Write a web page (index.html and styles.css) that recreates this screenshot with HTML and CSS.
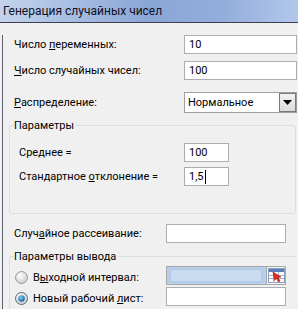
FILE: index.html
```html
<!DOCTYPE html>
<html>
<head>
<meta charset="utf-8">
<link rel="stylesheet" href="styles.css">
</head>
<body>
<div class="titlebar"><span class="title">Генерация случайных чисел</span></div>
<div class="content">
  <div class="row r1"><span class="label">Число <u>п</u>еременных:</span><div class="input wide">10</div></div>
  <div class="row r2"><span class="label"><u>Ч</u>исло случайных чисел:</span><div class="input wide">100</div></div>
  <div class="row r3"><span class="label"><u>Р</u>аспределение:</span>
    <div class="select"><span class="sel-text">Нормальное</span><span class="sel-btn"><svg width="9" height="5" viewBox="0 0 9 5"><path d="M0 0H9L4.5 5Z" fill="#000"/></svg></span></div>
  </div>
  <fieldset class="group g1">
    <legend>Параметры</legend>
    <div class="row gr1"><span class="label glabel">Сре<u>д</u>нее =</span><div class="input small">100</div></div>
    <div class="row gr2"><span class="label glabel">Стандартное <u>о</u>тклонение =</span><div class="input small">1,5<span class="caret"></span></div></div>
  </fieldset>
  <div class="row r4"><span class="label rlabel">Случ<u>а</u>йное рассеивание:</span><div class="input mid"></div></div>
  <fieldset class="group g2">
    <legend>Параметры вывода</legend>
    <div class="row rr1">
      <span class="radio"><svg width="13" height="13" viewBox="0 0 13 13"><defs><radialGradient id="ru" cx="0.4" cy="0.35" r="0.7"><stop offset="0" stop-color="#ffffff"/><stop offset="1" stop-color="#c9c9c9"/></radialGradient></defs><circle cx="6.5" cy="6.5" r="6" fill="url(#ru)" stroke="#9a9a9a"/></svg></span>
      <span class="label olabel">В<u>ы</u>ходной интервал:</span>
      <div class="refedit"><div class="ref-field"></div><span class="ref-btn"><svg width="17" height="15" viewBox="0 0 17 15"><rect x="0.5" y="0.5" width="16" height="14" fill="#ffffff" stroke="#8aa0bc"/><rect x="1" y="1" width="15" height="3" fill="#5a7fb8"/><path d="M1 7.5H16M1 10.5H16M5.5 4V15M10.5 4V15" stroke="#9fb3cc" stroke-width="1"/><path d="M5 4L13 9L10 9.5L12 13L10.5 14L8.5 10.5L6.5 12.5Z" fill="#e03020" stroke="#a01810" stroke-width="0.6"/></svg></span></div>
    </div>
    <div class="row rr2">
      <span class="radio"><svg width="13" height="13" viewBox="0 0 13 13"><defs><radialGradient id="rc" cx="0.4" cy="0.35" r="0.7"><stop offset="0" stop-color="#ffffff"/><stop offset="1" stop-color="#c9c9c9"/></radialGradient><radialGradient id="rd" cx="0.4" cy="0.35" r="0.7"><stop offset="0" stop-color="#7fd0ff"/><stop offset="1" stop-color="#0a5a9a"/></radialGradient></defs><circle cx="6.5" cy="6.5" r="6" fill="url(#rc)" stroke="#5a6a7a"/><circle cx="6.5" cy="6.5" r="3.3" fill="url(#rd)"/></svg></span>
      <span class="label olabel">Новый рабочий <u>л</u>ист:</span>
      <div class="input mid"></div>
    </div>
  </fieldset>
</div>
</body>
</html>
```

FILE: styles.css
```css
* { box-sizing: border-box; }
html, body { margin: 0; padding: 0; }
body {
  width: 298px;
  height: 309px;
  overflow: hidden;
  background: #f0f0f0;
  font-family: Roboto, "Liberation Sans", Arial, sans-serif;
  font-size: 11px;
  color: #000;
}
u { text-decoration: underline; text-underline-offset: 1px; }
.titlebar {
  height: 23px;
  background: linear-gradient(90deg, #c3d3ea 0%, #a6bde2 25%, #8aa6d6 50%, #93aedc 75%, #b2c7ea 100%);
  border-bottom: 1px solid #3e4050;
  padding-left: 3px;
  display: flex;
  align-items: center;
}
.title { font-size: 12px; color: #101020; }
.content {
  margin-left: 2px;
  border-left: 1px solid #5c6070;
  padding-left: 6px;
  padding-right: 2px;
  height: 286px;
}
.row { display: flex; align-items: center; }
.label { width: 175px; padding-left: 5px; flex: none; white-space: nowrap; }
.r1 { margin-top: 12px; }
.r2 { margin-top: 7px; }
.r3 { margin-top: 12px; }
.input {
  height: 19px;
  background: #fff;
  border: 1px solid #abadb3;
  padding-left: 4px;
  display: flex;
  align-items: center;
  flex: none;
}
.wide { width: 113px; }
.small { width: 45px; }
.mid { width: 120px; }
.caret { display: inline-block; width: 1px; height: 14px; background: #000; margin-left: 1px; }
.select {
  width: 113px;
  height: 21px;
  background: #fff;
  border: 1px solid #a0a0a0;
  display: flex;
  align-items: stretch;
  flex: none;
}
.sel-text { flex: 1; padding-left: 3px; display: flex; align-items: center; }
.sel-btn {
  width: 17px;
  border: 1px solid #7a7a7a;
  background: linear-gradient(180deg, #f2f2f2 0%, #dcdcdc 100%);
  display: flex;
  align-items: center;
  justify-content: center;
}
.group {
  margin: 0;
  border: 1px solid #d5dfe5;
  border-radius: 3px;
  padding: 0 0 0 4px;
}
.group legend { padding: 0 2px 0 0; line-height: 15px; }
.g1 { margin-top: 5px; height: 96px; }
.glabel { width: 170px; padding-left: 5px; }
.gr1 { margin-top: 10px; }
.gr2 { margin-top: 5px; }
.r4 { margin-top: 10px; }
.rlabel { width: 157px; }
.g2 { margin-top: 6px; height: 70px; border-right: none; border-bottom: none; border-radius: 3px 0 0 0; }
.rr1 { margin-top: 2px; }
.rr2 { margin-top: 2px; }
.radio { width: 13px; height: 13px; margin-left: 1px; flex: none; display: flex; margin-top: 3px; }
.olabel { width: 138px; padding-left: 5px; padding-top: 4px; }
.refedit {
  width: 120px;
  height: 19px;
  border: 1px solid #a8a8a8;
  background: #b8cfeb;
  display: flex;
  align-items: stretch;
  flex: none;
  padding: 2px 1px 2px 3px;
  gap: 4px;
}
.ref-field { flex: 1; background: #cadcf1; border: 1px solid #b0c6e2; }
.ref-btn { width: 19px; display: flex; align-items: center; justify-content: center; background: #f4f4f4; margin: -2px -1px -2px 0; border-left: 1px solid #a8a8a8; }
```
